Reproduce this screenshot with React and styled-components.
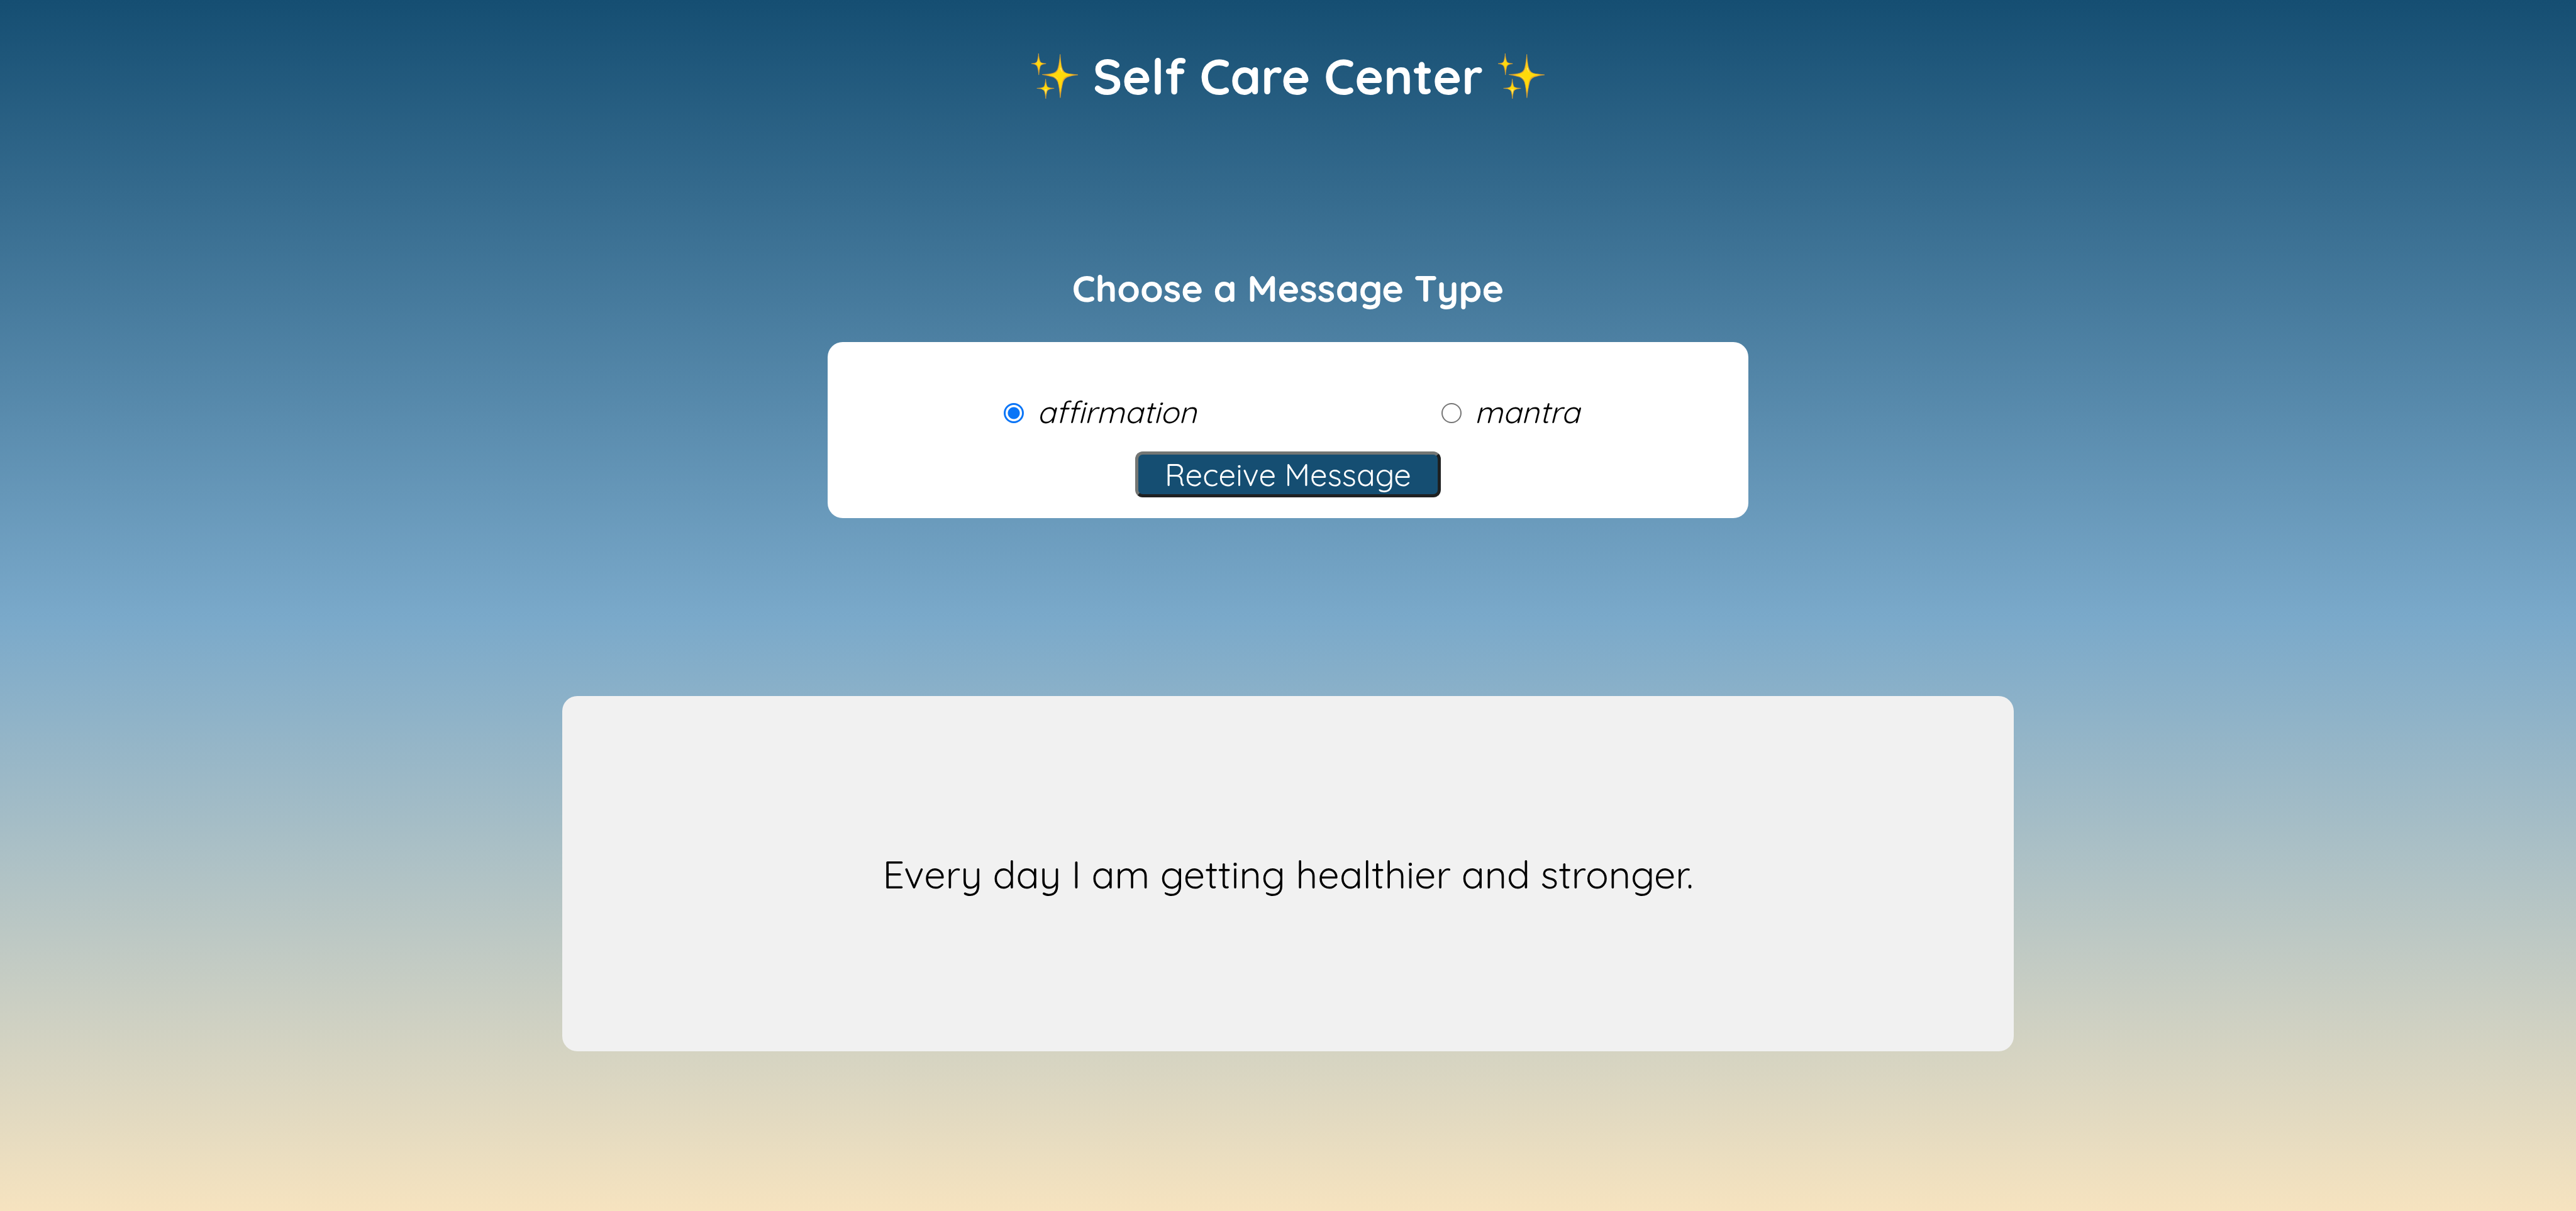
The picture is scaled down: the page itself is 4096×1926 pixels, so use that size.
import React, { useState } from "react";
import styled, { createGlobalStyle } from "styled-components";

const GlobalStyle = createGlobalStyle`
  * { box-sizing: border-box; }
  body {
    margin: 0;
    font-family: Quicksand, Lato, "Open Sans", sans-serif;
    color: #000;
  }
`;

const Page = styled.div`
  display: flex;
  flex-direction: column;
  align-items: center;
  min-height: 100vh;
  padding: 72px 32px;
  background: linear-gradient(#154e72, #7aa9ca 51%, #f6e3bf);
`;

const Header = styled.header`
  display: flex;
  align-items: center;
  gap: 24px;
`;

const Title = styled.h1`
  margin: 0;
  font-size: 78px;
  line-height: 98px;
  font-weight: 700;
  color: #fff;
`;

const SparkleIcon = styled.svg`
  width: 74px;
  height: 72px;
`;

const Chooser = styled.section`
  display: flex;
  flex-direction: column;
  align-items: center;
  gap: 50px;
  width: 100%;
  margin-top: 252px;
`;

const Heading = styled.h2`
  margin: 0;
  font-size: 59px;
  line-height: 72px;
  font-weight: 700;
  color: #fff;
`;

const ChoiceCard = styled.form`
  display: flex;
  flex-direction: column;
  align-items: center;
  gap: 33px;
  width: 100%;
  max-width: 1464px;
  padding: 81px 32px 33px;
  border-radius: 24px;
  background: #fff;
`;

const Options = styled.div`
  display: flex;
  flex-wrap: wrap;
  justify-content: center;
  gap: 0 377px;
`;

const Option = styled.label`
  display: flex;
  align-items: baseline;
  gap: 21px;
  margin-left: 12px;
  font-size: 49px;
  line-height: 60px;
  font-style: italic;
`;

const Radio = styled.input`
  appearance: none;
  width: 32px;
  height: 32px;
  margin: 0;
  border: 2px solid #767676;
  border-radius: 50%;
  background: #fff;

  &:checked {
    border: 3px solid #0a75f7;
    background: radial-gradient(circle, #0a75f7 9px, #fff 10px);
  }
`;

const SubmitButton = styled.button`
  padding: 1px 42px 0;
  border: 5px solid;
  border-color: #737674 #1f2122 #1f2122 #737674;
  border-radius: 12px;
  background: #154e72;
  color: #fff;
  font-family: inherit;
  font-size: 49px;
  line-height: 62px;
`;

const MessageCard = styled.section`
  width: 100%;
  max-width: 2308px;
  margin-top: 283px;
  padding: 246px 32px 245px;
  border-radius: 24px;
  background: #f1f1f1;
  text-align: center;
`;

const Message = styled.p`
  margin: 0;
  font-size: 61px;
  line-height: 74px;
`;

function Sparkles() {
  return (
    <SparkleIcon viewBox="93 60 366 356" aria-hidden="true">
      <g fill="#eaa92b" stroke="#eaa92b" strokeWidth="3" strokeLinejoin="round">
        <path d="M319 67C323 120 327 158 339 186Q350 213 386 220Q430 225 459 228Q412 233 378 245Q352 255 342 282C332 320 326 358 320 409C315 358 311 317 301 285Q290 258 264 246Q230 235 178 226Q235 224 265 214Q290 207 299 184C310 152 314 116 319 67Z" />
        <path d="M149 60C151 88 155 107 162 124Q168 135 183 137L208 140L184 145Q167 149 162 163C156 183 154 205 151 229C149 205 146 184 140 165Q135 151 118 145L93 140L119 136Q132 134 138 122C144 105 147 86 149 60Z" />
        <path d="M205 261C207 286 210 302 216 318Q222 328 240 331L272 334L243 339Q224 343 217 355C211 372 208 391 206 416C203 391 201 371 195 356Q188 343 169 338L136 334L168 331Q188 328 195 317C201 302 203 285 205 261Z" />
      </g>
      <g fill="#ffda0b">
        <path d="M320 103C323 145 327 177 339 198Q351 216 386 222L424 228Q382 232 359 245Q340 258 335 285Q329 325 320 365Q313 318 305 286Q296 256 265 241L218 228Q259 224 282 213Q304 201 309 180Q316 148 320 103Z" />
        <path d="M150 91Q153 119 161 130L184 140Q162 146 158 163L151 194Q147 169 141 157Q134 147 117 140Q138 137 143 125Z" />
        <path d="M205 288Q208 314 216 325L244 334Q219 342 212 358L206 389Q202 362 194 350L167 334Q190 332 197 320Z" />
      </g>
      <g fill="#ffe66b">
        <path d="M317 112Q321 154 305 188Q298 202 286 211Q302 202 309 185Q317 158 317 112Z" />
        <path d="M320 174Q323 198 340 211Q331 195 328 171Z" />
        <path d="M226 229Q274 234 303 266Q296 249 266 237Z" />
        <path d="M195 340Q205 345 217 340L211 356L206 380L201 356Z" />
        <path d="M148 89Q148 116 137 131L123 138Q140 135 145 123Z" />
      </g>
    </SparkleIcon>
  );
}

const messageTypes = ["affirmation", "mantra"];

export default function App() {
  const [selected, setSelected] = useState("affirmation");

  return (
    <>
      <GlobalStyle />
      <Page>
        <Header>
          <Sparkles />
          <Title>Self Care Center</Title>
          <Sparkles />
        </Header>
        <Chooser>
          <Heading>Choose a Message Type</Heading>
          <ChoiceCard onSubmit={(event) => event.preventDefault()}>
            <Options>
              {messageTypes.map((type) => (
                <Option key={type} htmlFor={type}>
                  <Radio
                    type="radio"
                    id={type}
                    name="message-type"
                    value={type}
                    checked={selected === type}
                    onChange={() => setSelected(type)}
                  />
                  {type}
                </Option>
              ))}
            </Options>
            <SubmitButton type="submit">Receive Message</SubmitButton>
          </ChoiceCard>
        </Chooser>
        <MessageCard>
          <Message>Every day I am getting healthier and stronger.</Message>
        </MessageCard>
      </Page>
    </>
  );
}
